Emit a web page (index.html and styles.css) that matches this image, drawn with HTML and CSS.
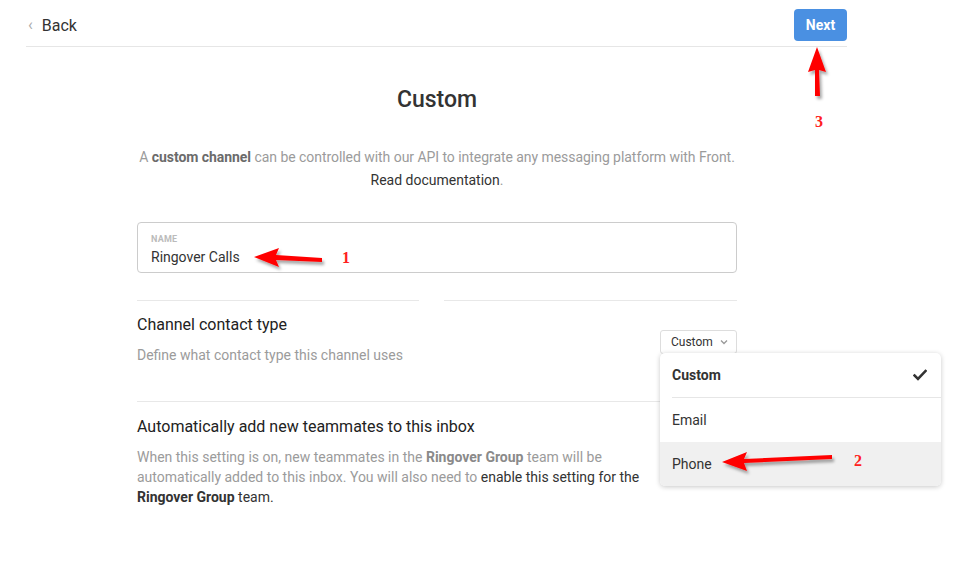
FILE: index.html
```html
<!DOCTYPE html>
<html>
<head>
<meta charset="utf-8">
<link rel="stylesheet" href="styles.css">
</head>
<body>
<div class="page">
  <header class="topbar">
    <a class="back"><span class="chev">&#8249;</span>Back</a>
    <button class="next">Next</button>
  </header>
  <main class="main">
    <h1 class="title">Custom</h1>
    <p class="intro"><span class="line">A <b>custom channel</b> can be controlled with our API to integrate any messaging platform with Front.</span><br><span class="doc">Read documentation</span>.</p>
    <div class="field">
      <div class="field-label">NAME</div>
      <div class="field-value">Ringover Calls</div>
    </div>
    <div class="split-rule"><span></span><span></span></div>
    <section class="setting">
      <div class="setting-text">
        <div class="setting-title">Channel contact type</div>
        <div class="setting-desc">Define what contact type this channel uses</div>
      </div>
      <div class="select-wrap">
        <div class="select">Custom <svg class="caret" width="8" height="6" viewBox="0 0 8 6"><path d="M1 1.5 L4 4.5 L7 1.5" fill="none" stroke="#999" stroke-width="1.3"/></svg></div>
        <div class="menu">
          <div class="menu-item selected">Custom <svg class="check" width="14" height="12" viewBox="0 0 14 12"><path d="M1.5 6.5 L5 10 L12.5 2" fill="none" stroke="#333" stroke-width="2.6" stroke-linecap="square"/></svg></div>
          <div class="menu-item">Email</div>
          <div class="menu-item hover">Phone</div>
        </div>
      </div>
    </section>
    <section class="setting second">
      <div class="setting-text">
        <div class="setting-title">Automatically add new teammates to this inbox</div>
        <div class="setting-desc wide">When this setting is on, new teammates in the <b>Ringover Group</b> team will be automatically added to this inbox. You will also need to <span class="dark">enable this setting for the <b>Ringover Group</b> team.</span></div>
      </div>
    </section>
  </main>
  <svg class="annot" width="959" height="568" viewBox="0 0 959 568">
    <defs>
      <filter id="sh" x="-20%" y="-50%" width="150%" height="200%">
        <feDropShadow dx="2" dy="3" stdDeviation="1.5" flood-color="#000" flood-opacity="0.35"/>
      </filter>
    </defs>
    <g fill="#ff0000" filter="url(#sh)">
      <polygon points="254,257 279,248 276,255 322,258 322,262 276,260 279,267"/>
      <polygon points="722,462 747,452 744,459 832,455 832,459 744,463 747,471"/>
      <polygon points="817,47 826,72 819,70 820,96 815,96 815,70 808,72"/>
    </g>
    <g class="nums" fill="#ff2020">
      <text x="342" y="263">1</text>
      <text x="854" y="466">2</text>
      <text x="815" y="127">3</text>
    </g>
  </svg>
</div>
</body>
</html>
```
FILE: styles.css
```css
* { box-sizing: border-box; }
html, body { margin: 0; padding: 0; background: #fff; }
body { font-family: Roboto, "Noto Sans", "Liberation Sans", sans-serif; color: #333; }
.page { position: relative; width: 959px; height: 568px; overflow: hidden; }

.topbar {
  margin: 0 112px 0 26px;
  height: 47px;
  border-bottom: 1px solid #e6e6e6;
  display: flex;
  align-items: center;
  justify-content: space-between;
  padding-top: 4px;
}
.back { font-size: 16px; color: #333; display: flex; align-items: center; }
.chev { color: #aaa; font-size: 16px; margin-right: 9px; position: relative; top: -1px; margin-left: 2px; }
.next {
  width: 53px; height: 32px;
  background: #4a90e2;
  color: #fff;
  border: none;
  border-radius: 4px;
  font-family: Roboto, sans-serif;
  font-weight: 700;
  font-size: 14px;
  padding: 0;
}

.main { width: 600px; margin-left: 137px; }
.title {
  margin: 38px 0 0;
  text-align: center;
  font-size: 23px;
  line-height: 30px;
  font-weight: 500;
  color: #333;
}
.intro {
  margin: 31px -10px 0;
  text-align: center;
  font-size: 14px;
  line-height: 23px;
  color: #9b9b9b;
}
.intro .line { white-space: nowrap; letter-spacing: -0.05px; }
.intro b { color: #6b6b6b; font-weight: 700; }
.doc { color: #333; }

.field {
  margin-top: 30px;
  height: 51px;
  border: 1px solid #ccc;
  border-radius: 4px;
  padding: 10px 13px 0;
}
.field-label { font-size: 9px; font-weight: 700; color: #bbb; line-height: 12px; letter-spacing: 0.2px; }
.field-value { font-size: 14px; color: #333; line-height: 20px; margin-top: 2px; }

.split-rule { display: flex; gap: 25px; margin-top: 27px; }
.split-rule span { height: 1px; background: #e8e8e8; }
.split-rule span:first-child { width: 282px; }
.split-rule span:last-child { flex: 1; }

.setting {
  display: flex;
  justify-content: space-between;
  padding-top: 14px;
  height: 101px;
  border-bottom: 1px solid #e8e8e8;
}
.setting.second { border-bottom: none; padding-top: 15px; }
.setting-title { font-size: 16px; line-height: 20px; color: #222; }
.setting-desc { font-size: 14px; line-height: 20px; color: #9b9b9b; margin-top: 10px; }
.setting-desc.wide { width: 510px; }
.setting-desc b { color: #8a8a8a; font-weight: 700; }
.setting-desc .dark { color: #333; }
.setting-desc .dark b { color: #333; }

.select-wrap { position: relative; margin-top: 15px; }
.select {
  width: 77px; height: 24px;
  border: 1px solid #ddd;
  border-radius: 3px;
  font-size: 12px;
  color: #333;
  display: flex;
  align-items: center;
  padding-left: 10px;
  gap: 7px;
}
.menu {
  position: absolute;
  top: 23px;
  left: 0;
  width: 281px;
  background: #fff;
  border-radius: 5px;
  box-shadow: 0 1px 5px rgba(0,0,0,0.22);
  overflow: hidden;
  z-index: 2;
}
.menu-item {
  height: 44px;
  display: flex;
  align-items: center;
  justify-content: space-between;
  padding: 0 14px 0 12px;
  font-size: 14px;
  color: #333;
}
.menu-item.selected { font-weight: 700; border-bottom: 1px solid #e6e6e6; margin-left: 12px; padding-left: 0; height: 45px; }
.menu-item.hover { background: #f0f0f0; }

.annot { position: absolute; left: 0; top: 0; pointer-events: none; z-index: 5; }
.nums text { font-family: "Liberation Serif", serif; font-weight: 700; font-size: 16px; }
```
